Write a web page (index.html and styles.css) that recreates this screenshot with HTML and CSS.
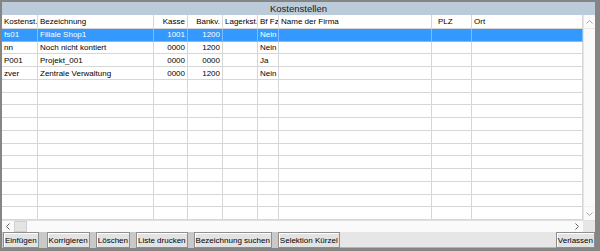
FILE: index.html
```html
<!DOCTYPE html>
<html lang="de">
<head>
    <meta charset="UTF-8">
    <title>Kostenstellen</title>
    <link rel="stylesheet" href="styles.css">
</head>
<body>

<div class="window">
    <div class="title">Kostenstellen</div>

    <div class="main">
        <div class="table">
            <div class="row head">
                <span>Kostenst.</span><span>Bezeichnung</span><span class="num">Kasse</span><span class="num">Bankv.</span><span>Lagerkst.</span><span>Bf Fz</span><span>Name der Firma</span><span class="plz">PLZ</span><span>Ort</span>
            </div>
            <div class="row selected">
                <span>fs01</span><span>Filiale Shop1</span><span class="num">1001</span><span class="num">1200</span><span></span><span>Nein</span><span></span><span></span><span></span>
            </div>
            <div class="row">
                <span>nn</span><span>Noch nicht kontiert</span><span class="num">0000</span><span class="num">1200</span><span></span><span>Nein</span><span></span><span></span><span></span>
            </div>
            <div class="row">
                <span>P001</span><span>Projekt_001</span><span class="num">0000</span><span class="num">0000</span><span></span><span>Ja</span><span></span><span></span><span></span>
            </div>
            <div class="row">
                <span>zver</span><span>Zentrale Verwaltung</span><span class="num">0000</span><span class="num">1200</span><span></span><span>Nein</span><span></span><span></span><span></span>
            </div>
            <!-- leere Zeilen -->
            <div class="row"><span></span><span></span><span></span><span></span><span></span><span></span><span></span><span></span><span></span></div>
            <div class="row"><span></span><span></span><span></span><span></span><span></span><span></span><span></span><span></span><span></span></div>
            <div class="row"><span></span><span></span><span></span><span></span><span></span><span></span><span></span><span></span><span></span></div>
            <div class="row"><span></span><span></span><span></span><span></span><span></span><span></span><span></span><span></span><span></span></div>
            <div class="row"><span></span><span></span><span></span><span></span><span></span><span></span><span></span><span></span><span></span></div>
            <div class="row"><span></span><span></span><span></span><span></span><span></span><span></span><span></span><span></span><span></span></div>
            <div class="row"><span></span><span></span><span></span><span></span><span></span><span></span><span></span><span></span><span></span></div>
            <div class="row"><span></span><span></span><span></span><span></span><span></span><span></span><span></span><span></span><span></span></div>
            <div class="row"><span></span><span></span><span></span><span></span><span></span><span></span><span></span><span></span><span></span></div>
            <div class="row"><span></span><span></span><span></span><span></span><span></span><span></span><span></span><span></span><span></span></div>
            <div class="row"><span></span><span></span><span></span><span></span><span></span><span></span><span></span><span></span><span></span></div>
        </div>

        <div class="vscroll">
            <div class="arrow">
                <svg width="7" height="4" viewBox="0 0 7 4"><path d="M0.5 3.5 L3.5 0.5 L6.5 3.5" fill="none" stroke="#a6a6a6"/></svg>
            </div>
            <div class="track"></div>
            <div class="arrow">
                <svg width="7" height="4" viewBox="0 0 7 4"><path d="M0.5 0.5 L3.5 3.5 L6.5 0.5" fill="none" stroke="#a6a6a6"/></svg>
            </div>
        </div>
    </div>

    <div class="hscroll">
        <div class="arrow">
            <svg width="4" height="7" viewBox="0 0 4 7"><path d="M3.5 0.5 L0.5 3.5 L3.5 6.5" fill="none" stroke="#606060"/></svg>
        </div>
        <div class="thumb"></div>
        <div class="track"></div>
        <div class="arrow">
            <svg width="4" height="7" viewBox="0 0 4 7"><path d="M0.5 0.5 L3.5 3.5 L0.5 6.5" fill="none" stroke="#606060"/></svg>
        </div>
        <div class="corner"></div>
    </div>

    <div class="buttons">
        <button>Einfügen</button>
        <button>Korrigieren</button>
        <button>Löschen</button>
        <button>Liste drucken</button>
        <button>Bezeichnung suchen</button>
        <button>Selektion Kürzel</button>
        <div class="filler"></div>
        <button>Verlassen</button>
    </div>
</div>

</body>
</html>
```

FILE: styles.css
```css
body {
    margin: 0;
    padding: 0;
    font-family: "Liberation Sans", Arial, sans-serif;
    font-size: 8px;
    color: #000;
}
.window {
    width: 600px;
    height: 251px;
    box-sizing: border-box;
    background-color: #858585;
    padding: 2px 5px 3px 2px;
    display: flex;
    flex-direction: column;
}
.title {
    height: 13px;
    line-height: 13px;
    background-color: #bccbda;
    text-align: center;
    font-size: 9.5px;
    color: #1a1a1a;
}
.main {
    height: 205px;
    display: flex;
    background-color: #fff;
}
.table {
    width: 581px;
    display: grid;
    grid-template-rows: 14px repeat(15, 1fr);
}
.row {
    display: grid;
    grid-template-columns: 36px 116px 34px 35px 35px 21px 153px 40px 111px;
}
.row span {
    box-sizing: border-box;
    border-right: 1px solid #d6d6d6;
    border-bottom: 1px solid #d6d6d6;
    padding: 0 2px;
    display: flex;
    align-items: center;
    white-space: nowrap;
    overflow: hidden;
}
.row span.num {
    justify-content: flex-end;
}
.row span.plz {
    padding-left: 6px;
}
.row.selected {
    background-color: #3399ff;
    color: #fff;
}
.row.selected span {
    border-color: #7fbcff;
}
.vscroll {
    width: 12px;
    box-sizing: border-box;
    border-left: 1px solid #e6e6e6;
    background-color: #fafafa;
    display: flex;
    flex-direction: column;
}
.vscroll .arrow {
    height: 13px;
    display: flex;
    align-items: center;
    justify-content: center;
    border-bottom: 1px solid #e8e8e8;
}
.vscroll .arrow:last-child {
    border-bottom: none;
    border-top: 1px solid #f0f0f0;
}
.vscroll .track {
    flex: 1;
}
.hscroll {
    height: 12px;
    display: flex;
    background-color: #fafafa;
    border-top: 1px solid #e0e0e0;
    box-sizing: border-box;
}
.hscroll .arrow {
    width: 12px;
    display: flex;
    align-items: center;
    justify-content: center;
}
.hscroll .thumb {
    width: 13px;
    box-sizing: border-box;
    background-color: #e4e4e4;
    border: 1px solid #d0d0d0;
}
.hscroll .track {
    flex: 1;
}
.hscroll .corner {
    width: 12px;
    background-color: #e6e6e6;
}
.buttons {
    height: 16px;
    display: flex;
    gap: 6px;
    padding: 0 0 0 1px;
    background-color: #c9c9c9;
}
.buttons button {
    font-family: "Liberation Sans", Arial, sans-serif;
    font-size: 8px;
    color: #000;
    height: 16px;
    margin: 0;
    padding: 0 1px;
    background-color: #e3e3e3;
    border: 1px solid #8e8e8e;
    box-shadow: inset 1px 1px #fff;
    white-space: nowrap;
}
.buttons button:first-child {
    margin-right: 2px;
}
.buttons .filler {
    flex: 1;
    background-color: #e6e6e6;
    border-bottom: 1px solid #b5b5b5;
    margin-left: -6px;
    margin-right: -6px;
}
```
